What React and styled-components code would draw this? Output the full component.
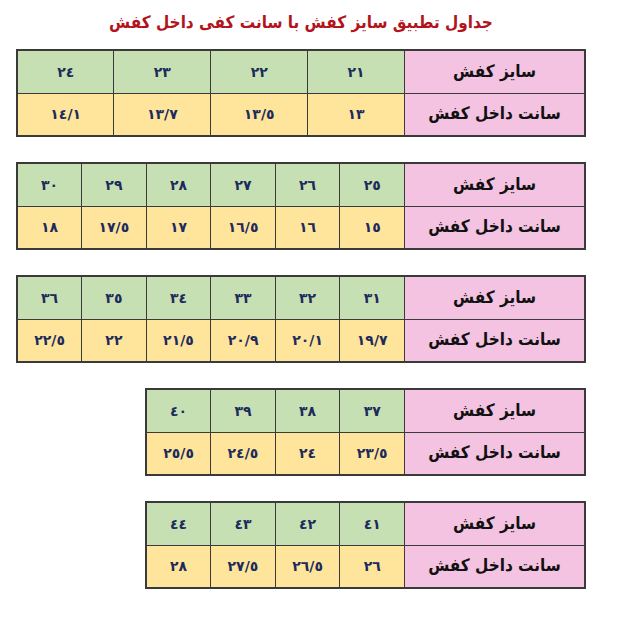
import React from 'react';
import styled, { createGlobalStyle } from 'styled-components';

const GlobalStyle = createGlobalStyle`
  html, body {
    margin: 0;
    padding: 0;
    background: #ffffff;
  }
  body {
    font-family: "DejaVu Sans Condensed", "DejaVu Sans", sans-serif;
  }
`;

const Page = styled.div`
  width: 628px;
  min-height: 618px;
  padding: 8px 0 0 16px;
  box-sizing: border-box;
`;

const Column = styled.div`
  width: 570px;
  display: flex;
  flex-direction: column;
  align-items: flex-end;
  gap: 25px;
`;

const Title = styled.h1`
  align-self: center;
  margin: 0 0 -12px;
  direction: rtl;
  font-size: 17px;
  font-weight: bold;
  color: #b3141c;
  line-height: 28px;
`;

const Table = styled.table`
  width: ${(props) => props.width}px;
  direction: rtl;
  border-collapse: collapse;
  border: 2px solid #3a3a3a;
  table-layout: fixed;
`;

const Row = styled.tr`
  height: 43px;
`;

const Label = styled.td`
  width: 179px;
  background-color: #f3c3e1;
  border: 1px solid #3a3a3a;
  text-align: center;
  font-size: 17px;
  font-weight: bold;
  color: #111111;
  padding: 0 0 2px;
`;

const Value = styled.td`
  background-color: ${(props) => (props.size ? '#c6e0b4' : '#fee59b')};
  border: 1px solid #3a3a3a;
  text-align: center;
  font-family: "DejaVu Sans", sans-serif;
  font-size: 14px;
  font-weight: bold;
  color: #1d2b5c;
  letter-spacing: 2px;
  padding: 0;
`;

const Num = styled.span`
  direction: ltr;
  unicode-bidi: isolate;
`;

const toArabic = (s) => s.replace(/[0-9]/g, (d) => '٠١٢٣٤٥٦٧٨٩'[d]);

const tables = [
  { sizes: ['21', '22', '23', '24'], cm: ['13', '13/5', '13/7', '14/1'], width: 570 },
  {
    sizes: ['25', '26', '27', '28', '29', '30'],
    cm: ['15', '16', '16/5', '17', '17/5', '18'],
    width: 570,
  },
  {
    sizes: ['31', '32', '33', '34', '35', '36'],
    cm: ['19/7', '20/1', '20/9', '21/5', '22', '22/5'],
    width: 570,
  },
  { sizes: ['37', '38', '39', '40'], cm: ['23/5', '24', '24/5', '25/5'], width: 441 },
  { sizes: ['41', '42', '43', '44'], cm: ['26', '26/5', '27/5', '28'], width: 441 },
];

function SizeTable({ sizes, cm, width }) {
  return (
    <Table width={width}>
      <tbody>
        <Row>
          <Label>سايز كفش</Label>
          {sizes.map((s) => (
            <Value size key={s}>
              <Num>{toArabic(s)}</Num>
            </Value>
          ))}
        </Row>
        <Row>
          <Label>سانت داخل كفش</Label>
          {cm.map((c) => (
            <Value key={c}>
              <Num>{toArabic(c)}</Num>
            </Value>
          ))}
        </Row>
      </tbody>
    </Table>
  );
}

export default function App() {
  return (
    <>
      <GlobalStyle />
      <Page>
        <Column>
          <Title>جداول تطبيق سايز كفش با سانت كفى داخل كفش</Title>
          {tables.map((t, i) => (
            <SizeTable key={i} {...t} />
          ))}
        </Column>
      </Page>
    </>
  );
}
